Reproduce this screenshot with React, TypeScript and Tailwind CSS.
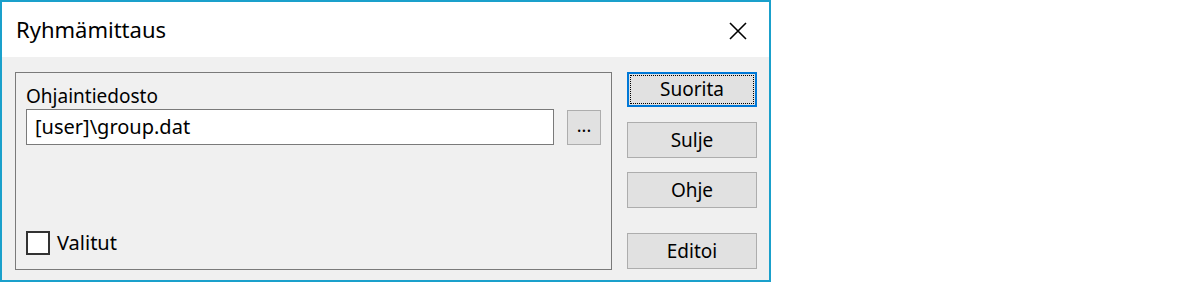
import React from "react";

const font = { fontFamily: '"Segoe UI", "Noto Sans", "Open Sans", sans-serif' };

function DialogButton({ label, focused }: { label: string; focused?: boolean }) {
  if (focused) {
    return (
      <button className="h-[35px] w-[130px] border-2 border-[#0078d7] bg-[#e1e1e1] p-px">
        <span className="flex h-full w-full items-center justify-center border border-dotted border-black text-[19px] text-black">
          {label}
        </span>
      </button>
    );
  }
  return (
    <button className="flex h-[36px] w-[130px] items-center justify-center border border-[#adadad] bg-[#e1e1e1] text-[19px] text-black">
      {label}
    </button>
  );
}

const App = () => {
  return (
    <div className="h-[282px] w-[1200px] bg-white" style={font}>
      <div className="flex h-[282px] w-[771px] flex-col border-2 border-[#1aa0cb] bg-white">
        {/* title bar */}
        <div className="flex h-[55px] shrink-0 items-center justify-between pl-[14px] pr-[22px]">
          <span className="text-[22px] text-black">Ryhmämittaus</span>
          <svg width="18" height="18" viewBox="0 0 18 18" className="mt-[2px]">
            <path d="M1 1 L17 17 M17 1 L1 17" stroke="#000" strokeWidth="1.6" fill="none" />
          </svg>
        </div>

        {/* body */}
        <div className="flex flex-1 gap-[15px] bg-[#f0f0f0] pl-[13px] pr-[12px] pt-[15px] pb-[10px]">
          <div className="flex h-[198px] w-[597px] flex-col border border-[#7a7a7a] px-[10px] pt-[11px]">
            <span className="text-[19px] leading-[24px] text-black">Ohjaintiedosto</span>
            <div className="mt-[1px] flex items-center gap-[13px]">
              <div className="flex h-[36px] w-[528px] items-center border border-[#7a7a7a] bg-white pl-[8px] text-[20px] text-black">
                [user]\group.dat
              </div>
              <button className="flex h-[35px] w-[34px] items-center justify-center border border-[#adadad] bg-[#e1e1e1] pb-[4px] text-[18px] leading-none text-black">
                ...
              </button>
            </div>
            <label className="mt-auto mb-[11px] flex items-center gap-[7px]">
              <span className="h-[24px] w-[24px] border-2 border-[#333] bg-white" />
              <span className="text-[20px] text-black">Valitut</span>
            </label>
          </div>

          <div className="flex flex-col">
            <DialogButton label="Suorita" focused />
            <div className="mt-[15px]">
              <DialogButton label="Sulje" />
            </div>
            <div className="mt-[14px]">
              <DialogButton label="Ohje" />
            </div>
            <div className="mt-auto mb-[1px]">
              <DialogButton label="Editoi" />
            </div>
          </div>
        </div>
      </div>
    </div>
  );
};

export default App;
